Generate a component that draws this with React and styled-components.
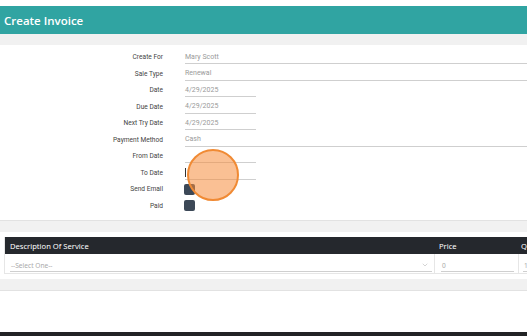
import React from 'react';
import styled, { createGlobalStyle } from 'styled-components';
import { ChevronDown } from 'lucide-react';

const Global = createGlobalStyle`
  html, body { margin: 0; padding: 0; background: #fff; }
  body { font-family: 'Open Sans', 'Noto Sans', sans-serif; overflow: hidden; }
`;

const Page = styled.div`
  position: relative;
  width: 527px;
  height: 336px;
  overflow: hidden;
  background: #fff;
  display: flex;
  flex-direction: column;
`;

const TopGap = styled.div`
  height: 6px;
`;

const TitleBar = styled.div`
  height: 28px;
  background: #30a4a2;
  color: #fff;
  font-size: 11.5px;
  font-weight: 600;
  display: flex;
  align-items: center;
  padding-left: 4px;
`;

const Band = styled.div`
  height: ${p => p.h}px;
  background: #f1f1f1;
  border-top: ${p => (p.top ? '1px solid #e2e2e2' : 'none')};
  border-bottom: ${p => (p.bottom ? '1px solid #e2e2e2' : 'none')};
`;

const Form = styled.div`
  padding-top: 4px;
  height: 171px;
`;

const Row = styled.div`
  display: grid;
  grid-template-columns: 163px 1fr;
  column-gap: 22px;
  height: 16.5px;
  align-items: center;
  font-family: Roboto, 'Liberation Sans', sans-serif;
`;

const Label = styled.div`
  text-align: right;
  font-size: 6.6px;
  color: #444;
`;

const Field = styled.div`
  position: relative;
  width: ${p => (p.short ? '71px' : '400px')};
  height: 13px;
  border-bottom: 1px solid #cfcfcf;
  font-size: 7px;
  color: #9a9a9a;
  display: flex;
  align-items: center;
`;

const Caret = styled.span`
  width: 1px;
  height: 9px;
  background: #333;
`;

const Check = styled.div`
  width: 11px;
  height: 11px;
  border-radius: 2px;
  background: #3c4857;
  margin-left: -1px;
`;

const TableWrap = styled.div`
  padding: 5px 0 5px 4px;
`;

const Table = styled.div`
  width: 560px;
  border: 1px solid #e6e6e6;
  border-top: none;
`;

const Cols = styled.div`
  display: grid;
  grid-template-columns: 429px 84px 1fr;
  height: ${p => p.h}px;
  align-items: center;
  background: ${p => (p.head ? '#25282d' : '#fff')};
  color: ${p => (p.head ? '#fff' : '#aaa')};
  font-size: ${p => (p.head ? '7.6px' : '6.6px')};
  font-family: 'Noto Sans', 'Open Sans', sans-serif;
`;

const Cell = styled.div`
  padding-left: ${p => p.pl || 5}px;
  height: 100%;
  display: flex;
  align-items: center;
  border-left: ${p => (p.divide ? '1px solid #e6e6e6' : 'none')};
`;

const CellInput = styled.div`
  width: ${p => p.w}px;
  height: 12px;
  margin-top: 4px;
  border-bottom: 1px solid #cfcfcf;
  display: flex;
  align-items: center;
  justify-content: space-between;
  padding-left: 1px;
`;

const Spacer = styled.div`
  flex: 1;
`;

const Footer = styled.div`
  height: 4px;
  background: #222325;
`;

const Touch = styled.div`
  position: absolute;
  left: 187px;
  top: 149px;
  width: 48px;
  height: 48px;
  border-radius: 50%;
  border: 2.5px solid #f08a34;
  background: rgba(246, 140, 60, 0.55);
`;

const rows = [
  { label: 'Create For', value: 'Mary Scott' },
  { label: 'Sale Type', value: 'Renewal' },
  { label: 'Date', value: '4/29/2025', short: true },
  { label: 'Due Date', value: '4/29/2025', short: true },
  { label: 'Next Try Date', value: '4/29/2025', short: true },
  { label: 'Payment Method', value: 'Cash' },
  { label: 'From Date', value: '', short: true },
  { label: 'To Date', caret: true, short: true },
];

export default function App() {
  return (
    <Page>
      <Global />
      <TopGap />
      <TitleBar>Create Invoice</TitleBar>
      <Band h={11} />
      <Form>
        {rows.map(r => (
          <Row key={r.label}>
            <Label>{r.label}</Label>
            <Field short={r.short}>{r.caret ? <Caret /> : r.value}</Field>
          </Row>
        ))}
        <Row>
          <Label>Send Email</Label>
          <Check />
        </Row>
        <Row>
          <Label>Paid</Label>
          <Check />
        </Row>
      </Form>
      <Band h={11} top />
      <TableWrap>
        <Table>
          <Cols head h={17}>
            <Cell>Description Of Service</Cell>
            <Cell>Price</Cell>
            <Cell pl={3}>Quantity</Cell>
          </Cols>
          <Cols h={19}>
            <Cell>
              <CellInput w={421}>
                --Select One--
                <ChevronDown size={8} color="#aaa" strokeWidth={1.5} style={{ marginRight: 3 }} />
              </CellInput>
            </Cell>
            <Cell divide pl={6}>
              <CellInput w={72}>0</CellInput>
            </Cell>
            <Cell divide pl={4}>
              <CellInput w={40}>1</CellInput>
            </Cell>
          </Cols>
        </Table>
      </TableWrap>
      <Band h={11} bottom />
      <Spacer />
      <Footer />
      <Touch />
    </Page>
  );
}
